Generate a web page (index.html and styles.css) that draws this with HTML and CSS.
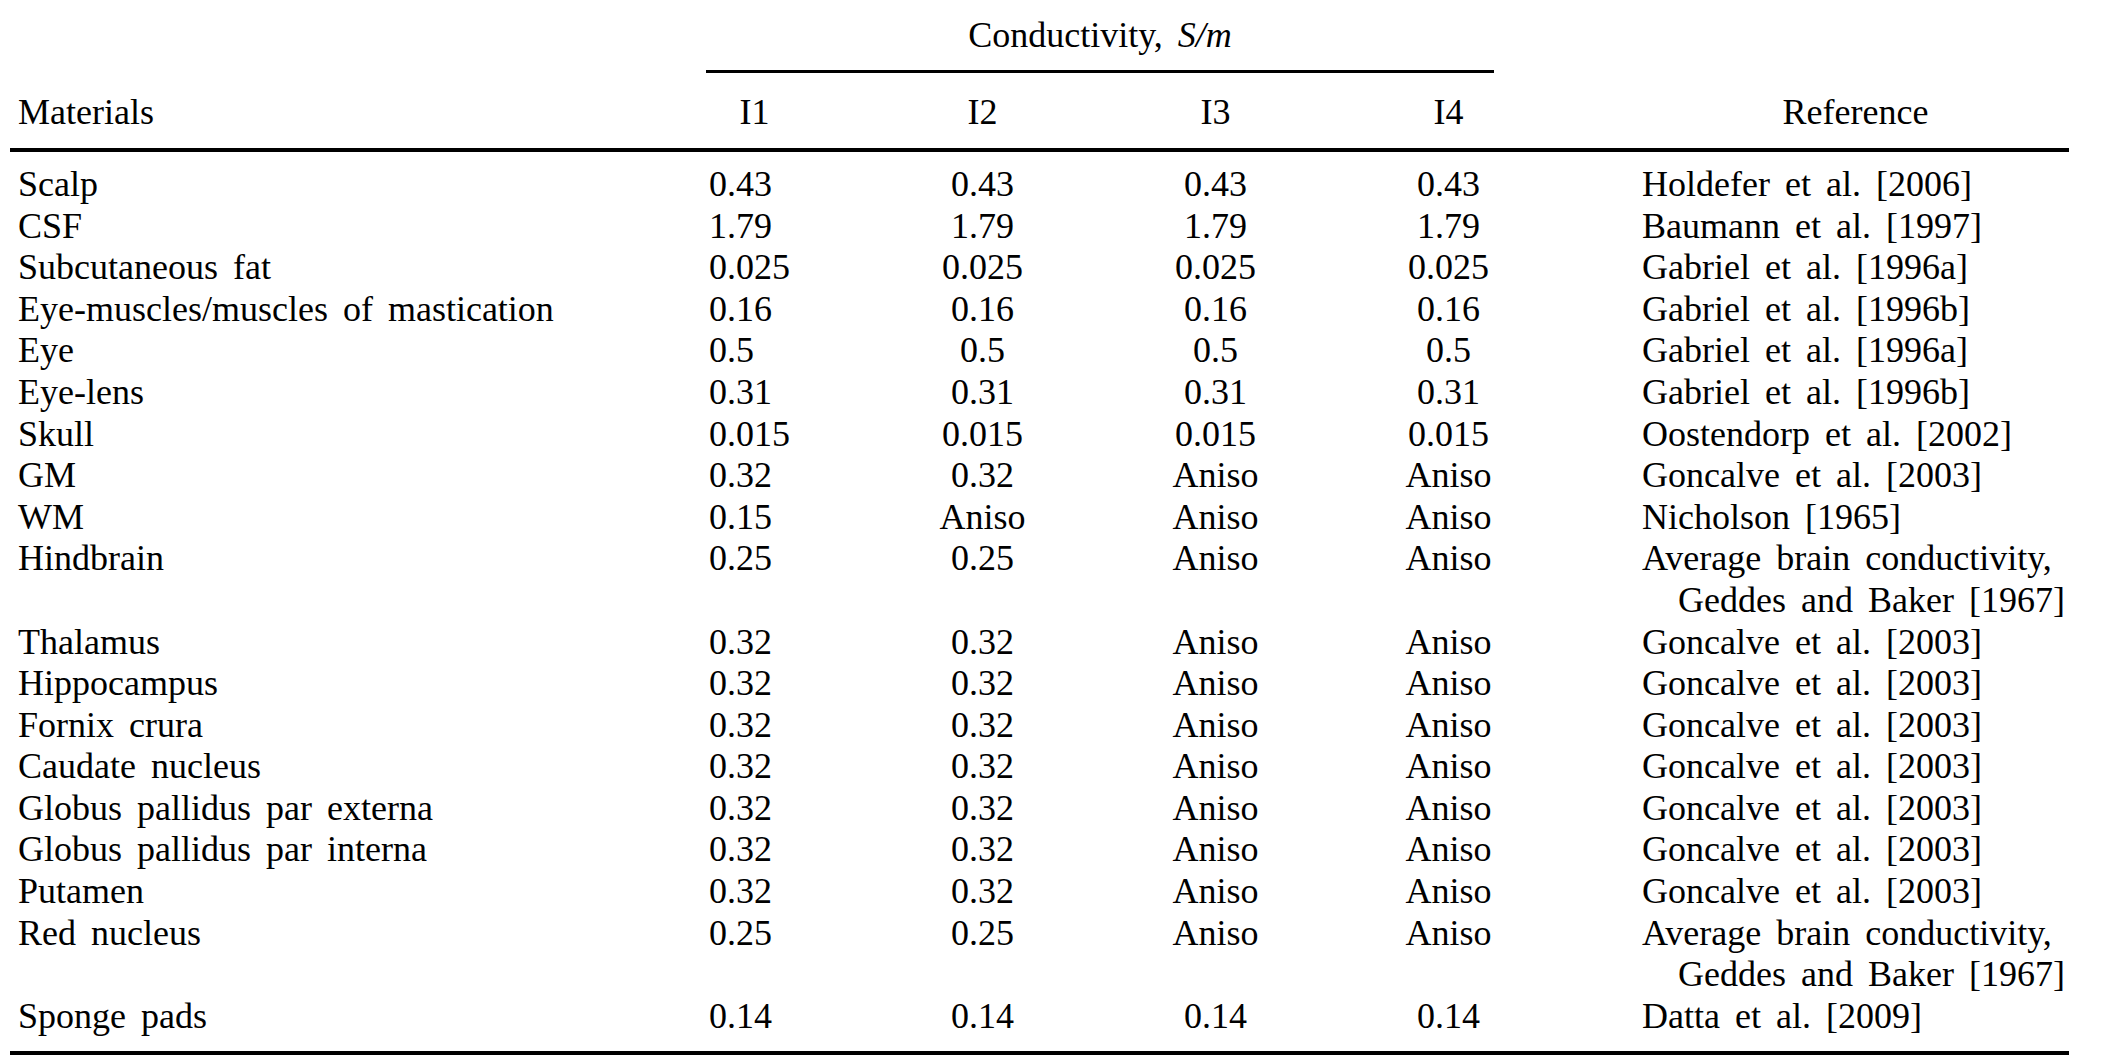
FILE: index.html
```html
<!DOCTYPE html>
<html lang="en">
<head>
<meta charset="utf-8">
<title>Conductivity table</title>
<link rel="stylesheet" href="styles.css">
</head>
<body>
<table class="tbl">
  <colgroup>
    <col class="c-mat">
    <col class="c-i1">
    <col class="c-i">
    <col class="c-i">
    <col class="c-i">
    <col class="c-ref">
  </colgroup>
  <thead>
    <tr class="row-group">
      <th></th>
      <th colspan="4" class="group"><div class="spanner">Conductivity, <i>S/m</i></div></th>
      <th></th>
    </tr>
    <tr class="row-head">
      <th class="mat">Materials</th>
      <th>I1</th>
      <th>I2</th>
      <th>I3</th>
      <th>I4</th>
      <th class="ref">Reference</th>
    </tr>
  </thead>
  <tbody>
    <tr class="first"><td class="mat">Scalp</td><td class="i1">0.43</td><td>0.43</td><td>0.43</td><td>0.43</td><td class="ref">Holdefer et al. [2006]</td></tr>
    <tr><td class="mat">CSF</td><td class="i1">1.79</td><td>1.79</td><td>1.79</td><td>1.79</td><td class="ref">Baumann et al. [1997]</td></tr>
    <tr><td class="mat">Subcutaneous fat</td><td class="i1">0.025</td><td>0.025</td><td>0.025</td><td>0.025</td><td class="ref">Gabriel et al. [1996a]</td></tr>
    <tr><td class="mat">Eye-muscles/muscles of mastication</td><td class="i1">0.16</td><td>0.16</td><td>0.16</td><td>0.16</td><td class="ref">Gabriel et al. [1996b]</td></tr>
    <tr><td class="mat">Eye</td><td class="i1">0.5</td><td>0.5</td><td>0.5</td><td>0.5</td><td class="ref">Gabriel et al. [1996a]</td></tr>
    <tr><td class="mat">Eye-lens</td><td class="i1">0.31</td><td>0.31</td><td>0.31</td><td>0.31</td><td class="ref">Gabriel et al. [1996b]</td></tr>
    <tr><td class="mat">Skull</td><td class="i1">0.015</td><td>0.015</td><td>0.015</td><td>0.015</td><td class="ref">Oostendorp et al. [2002]</td></tr>
    <tr><td class="mat">GM</td><td class="i1">0.32</td><td>0.32</td><td>Aniso</td><td>Aniso</td><td class="ref">Goncalve et al. [2003]</td></tr>
    <tr><td class="mat">WM</td><td class="i1">0.15</td><td>Aniso</td><td>Aniso</td><td>Aniso</td><td class="ref">Nicholson [1965]</td></tr>
    <tr><td class="mat">Hindbrain</td><td class="i1">0.25</td><td>0.25</td><td>Aniso</td><td>Aniso</td><td class="ref hang">Average brain conductivity,<br>Geddes and Baker [1967]</td></tr>
    <tr><td class="mat">Thalamus</td><td class="i1">0.32</td><td>0.32</td><td>Aniso</td><td>Aniso</td><td class="ref">Goncalve et al. [2003]</td></tr>
    <tr><td class="mat">Hippocampus</td><td class="i1">0.32</td><td>0.32</td><td>Aniso</td><td>Aniso</td><td class="ref">Goncalve et al. [2003]</td></tr>
    <tr><td class="mat">Fornix crura</td><td class="i1">0.32</td><td>0.32</td><td>Aniso</td><td>Aniso</td><td class="ref">Goncalve et al. [2003]</td></tr>
    <tr><td class="mat">Caudate nucleus</td><td class="i1">0.32</td><td>0.32</td><td>Aniso</td><td>Aniso</td><td class="ref">Goncalve et al. [2003]</td></tr>
    <tr><td class="mat">Globus pallidus par externa</td><td class="i1">0.32</td><td>0.32</td><td>Aniso</td><td>Aniso</td><td class="ref">Goncalve et al. [2003]</td></tr>
    <tr><td class="mat">Globus pallidus par interna</td><td class="i1">0.32</td><td>0.32</td><td>Aniso</td><td>Aniso</td><td class="ref">Goncalve et al. [2003]</td></tr>
    <tr><td class="mat">Putamen</td><td class="i1">0.32</td><td>0.32</td><td>Aniso</td><td>Aniso</td><td class="ref">Goncalve et al. [2003]</td></tr>
    <tr><td class="mat">Red nucleus</td><td class="i1">0.25</td><td>0.25</td><td>Aniso</td><td>Aniso</td><td class="ref hang">Average brain conductivity,<br>Geddes and Baker [1967]</td></tr>
    <tr class="last"><td class="mat">Sponge pads</td><td class="i1">0.14</td><td>0.14</td><td>0.14</td><td>0.14</td><td class="ref">Datta et al. [2009]</td></tr>
  </tbody>
</table>
</body>
</html>
```

FILE: styles.css
```css
html, body {
  margin: 0;
  padding: 0;
  background: #ffffff;
}

body {
  font-family: "Liberation Serif", "Times New Roman", serif;
  font-size: 36px;
  color: #000000;
  word-spacing: 6px;
}

.tbl {
  margin-left: 10px;
  border-collapse: separate;
  border-spacing: 0;
  table-layout: fixed;
  width: 2059px;
}

.c-mat { width: 633px; }
.c-i1 { width: 223px; }
.c-i { width: 233px; }
.c-ref { width: 504px; }

.tbl th,
.tbl td {
  padding: 0;
  font-weight: normal;
  line-height: 41.6px;
  white-space: nowrap;
  vertical-align: top;
  text-align: center;
}

.row-group th {
  padding-top: 15px;
}

.spanner {
  margin-left: 63px;
  width: 788px;
  padding-bottom: 13.4px;
  border-bottom: 3px solid #000;
  text-align: center;
}

.row-head th {
  padding-top: 19px;
  padding-bottom: 14.4px;
  border-bottom: 4px solid #000;
}

.tbl .mat {
  text-align: left;
  padding-left: 8px;
}

.tbl .ref {
  text-align: left;
  padding-left: 77px;
}

.tbl th.ref {
  text-align: center;
}

.tbl td.i1 {
  text-align: left;
  padding-left: 66px;
}

.tbl td.hang {
  padding-left: 113px;
  text-indent: -36px;
}

.first td {
  padding-top: 12px;
}

.last td {
  padding-bottom: 13.4px;
  border-bottom: 4px solid #000;
}
```
